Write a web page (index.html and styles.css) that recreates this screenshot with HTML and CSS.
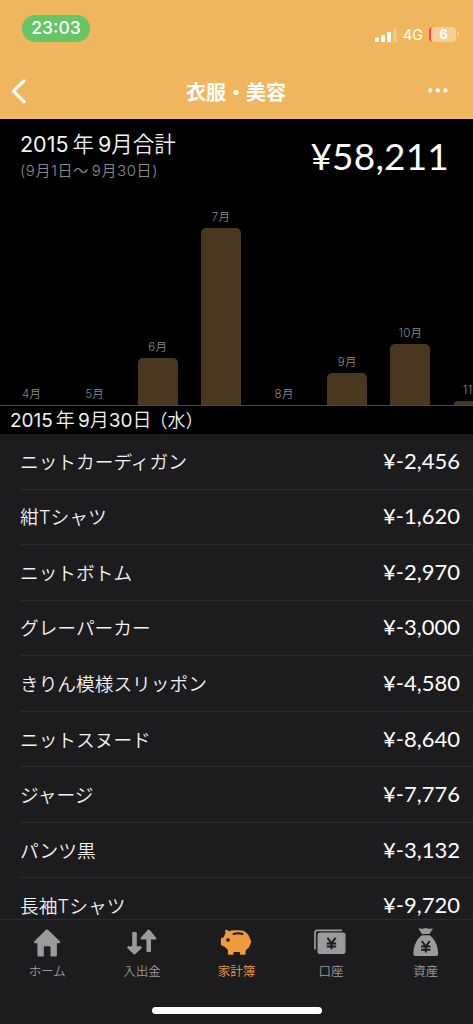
FILE: index.html
```
<!DOCTYPE html>
<html lang="ja">
<head>
    <meta charset="UTF-8">
    <meta name="viewport" content="width=device-width, initial-scale=1.0">
    <title>衣服・美容</title>
    <link rel="stylesheet" href="styles.css">
</head>
<body>
    <header class="header">
        <div class="status">
            <span class="clock">23:03</span>
            <div class="status-right">
                <svg class="signal" width="22" height="14" viewBox="0 0 22 14" fill="#fff">
                    <rect x="0" y="9.5" width="4" height="4.5" rx="1"/>
                    <rect x="6" y="7" width="4" height="7" rx="1"/>
                    <rect x="12" y="4" width="4" height="10" rx="1"/>
                    <rect x="18" y="0.5" width="4" height="13.5" rx="1" opacity=".25"/>
                </svg>
                <span class="network">4G</span>
                <span class="battery">6</span>
                <span class="battery-cap"></span>
            </div>
        </div>
        <nav class="nav">
            <svg width="16" height="26" viewBox="0 0 16 26" fill="none" stroke="#fff" stroke-width="3.1" stroke-linecap="round" stroke-linejoin="round">
                <path d="M14 2.800 3.400 13.200 14 23.700"/>
            </svg>
            <h1 class="title">衣服・美容</h1>
            <svg width="20" height="6" viewBox="0 0 20 6" fill="#fff">
                <circle cx="2.2" cy="2.4" r="2.1"/>
                <circle cx="9.8" cy="2.4" r="2.1"/>
                <circle cx="17.4" cy="2.4" r="2.1"/>
            </svg>
        </nav>
    </header>

    <section class="summary">
        <div>
            <p class="month"><span class="num">2015</span><span class="kanji">年</span><span class="num">9</span>月合計</p>
            <p class="period">(9月1日〜<span class="gap">9</span>月30日)</p>
        </div>
        <p class="total">¥58,211</p>
    </section>

    <!-- Monthly bars -->
    <section class="chart">
        <div class="col"><span>4月</span></div>
        <div class="col"><span>5月</span></div>
        <div class="col"><span>6月</span><div class="bar" style="height: 47px"></div></div>
        <div class="col"><span>7月</span><div class="bar" style="height: 177.5px"></div></div>
        <div class="col"><span>8月</span></div>
        <div class="col"><span>9月</span><div class="bar" style="height: 32px"></div></div>
        <div class="col"><span>10月</span><div class="bar" style="height: 61px"></div></div>
        <div class="col"><span>11月</span><div class="bar" style="height: 4px"></div></div>
    </section>

    <h2 class="date"><span class="num">2015</span><span class="kanji">年</span><span class="num">9</span>月<span class="num">30</span>日<span class="weekday">（水）</span></h2>

    <ul class="list">
        <li><span>ニットカーディガン</span><span class="amount">¥-2,456</span></li>
        <li><span>紺Tシャツ</span><span class="amount">¥-1,620</span></li>
        <li><span>ニットボトム</span><span class="amount">¥-2,970</span></li>
        <li><span>グレーパーカー</span><span class="amount">¥-3,000</span></li>
        <li><span>きりん模様スリッポン</span><span class="amount">¥-4,580</span></li>
        <li><span>ニットスヌード</span><span class="amount">¥-8,640</span></li>
        <li><span>ジャージ</span><span class="amount">¥-7,776</span></li>
        <li><span>パンツ黒</span><span class="amount">¥-3,132</span></li>
        <li><span>長袖Tシャツ</span><span class="amount">¥-9,720</span></li>
    </ul>

    <footer class="tabbar">
        <div class="tabs">
            <a class="tab">
                <svg width="34" height="30" viewBox="0 0 34 30" fill="currentColor">
                    <path d="M16 .8q1-.8 2 0L30 12.600q.8 1.400-.8 1.700h-2.300v12q0 1.200-1.200 1.200h-5.200v-9.300q0-1-1-1h-4.700q-1 0-1 1v9.300H8.600q-1.200 0-1.200-1.200v-12H5q-1.600-.3-.8-1.700z"/>
                </svg>
                <span>ホーム</span>
            </a>
            <a class="tab">
                <svg width="34" height="30" viewBox="0 0 34 30" fill="currentColor">
                    <path d="M7.200 4q0-1 1-1h2.600q1 0 1 1v13.300h4q1.800.4.7 2l-6 5.800q-1 .8-2 0l-6-5.800q-1.100-1.600.7-2h4z"/>
                    <path d="M21.400 22q0 1 1 1H25q1 0 1-1V10.500h4.500q1.400-.4.600-1.800L24.700.9q-1-.8-2 0l-7 7.800q-.8 1.400.8 1.800h4.900z"/>
                </svg>
                <span>入出金</span>
            </a>
            <a class="tab active">
                <svg width="34" height="30" viewBox="0 0 34 30">
                    <path fill="currentColor" d="M6.300 1.300q0-1.200 1.200-.6l2.800 1.500Q12.500 1.200 15 1.200h6q7 .4 9.600 7.400l1.500 3.600q.4.800-.2 1.500l-2 4.800-3.300 3v3.200q0 1-1 1h-3.800q-1 0-1-1v-1.800h-6.200v1.800q0 1-1 1H9.900q-1 0-1-1v-3.600L6 18.100l-3.100-1.600q-1-.5-1-1.500V10q0-1 1-1.200l1.700-.6 1.700-3.500z"/>
                    <circle cx="9" cy="11.100" r="1.800" fill="#1c1c1e"/>
                    <path d="M14.500 5q4.500-1.500 9 0" fill="none" stroke="#1c1c1e" stroke-width="1.900" stroke-linecap="round"/>
                </svg>
                <span>家計簿</span>
            </a>
            <a class="tab">
                <svg width="34" height="30" viewBox="0 0 34 30">
                    <path d="M1 20.500V3.800q0-2.500 2.500-2.500H28" fill="none" stroke="currentColor" stroke-width="1.700"/>
                    <rect x="3.500" y="3.500" width="28" height="21.500" rx="2.500" fill="currentColor"/>
                    <path d="m13.500 8.800 4 5.500 4-5.500M12.800 14.400h9.400M12.800 17.500h9.400M17.500 14.300v6" fill="none" stroke="#1c1c1e" stroke-width="2"/>
                </svg>
                <span>口座</span>
            </a>
            <a class="tab">
                <svg width="34" height="30" viewBox="0 0 34 30">
                    <path fill="currentColor" d="M10.500-.8q2.300.9 4 .2 2.200-.8 4.400 0 2 .7 4-.2 1.200-.2.700.9l-3.200 5h-7.400L9.800.1q-.5-1.100.7-.9zM13 6.200h7.600c4.500 3.300 8.200 9 8.600 18.600q0 2.200-2.200 2.200H6.500q-2.200 0-2.200-2.200C4.700 15.200 8.500 9.500 13 6.200z"/>
                    <path d="m12.800 12 4 5.500 4-5.500M12.100 17.600h9.400M12.100 20.700h9.400M16.800 17.500v6" fill="none" stroke="#1c1c1e" stroke-width="2"/>
                </svg>
                <span>資産</span>
            </a>
        </div>
        <div class="home-indicator"></div>
    </footer>
</body>
</html>
```

FILE: styles.css
```
* {
    box-sizing: border-box;
}
body {
    margin: 0;
    height: 1024px;
    display: flex;
    flex-direction: column;
    overflow: hidden;
    background-color: #000;
    color: #f2f2f2;
    font-family: Inter, "Noto Sans CJK JP", sans-serif;
    font-weight: 350;
}
p, h1, h2, ul {
    margin: 0;
    padding: 0;
}
svg {
    overflow: visible;
}
.header {
    flex: none;
    height: 118.500px;
    background-color: #f0b65e;
    color: #fff;
}
.status {
    height: 62px;
    padding: 15px 14px 0 22px;
    display: flex;
    justify-content: space-between;
    align-items: flex-start;
}
.clock {
    width: 68px;
    height: 27px;
    border-radius: 14px;
    background-color: #65c666;
    font-size: 17.500px;
    font-weight: 450;
    line-height: 26px;
    text-align: center;
}
.status-right {
    display: flex;
    align-items: center;
    margin-top: 12px;
}
.network {
    width: 22px;
    margin-left: 6px;
    font-size: 14.500px;
    font-weight: 400;
    line-height: 15px;
}
.battery {
    width: 27px;
    height: 15px;
    margin-left: 4px;
    border-radius: 4px;
    border-left: 2px solid #f4483e;
    background-color: #f5cf94;
    font-size: 13px;
    font-weight: 700;
    line-height: 15px;
    text-align: center;
}
.battery-cap {
    width: 2px;
    height: 5px;
    margin-left: 1px;
    border-radius: 0 2px 2px 0;
    background-color: #f5cf94;
}
.nav {
    height: 57px;
    padding: 1px 25px 0 10px;
    display: flex;
    justify-content: space-between;
    align-items: center;
}
.title {
    padding: 3px 0 0 18px;
    font-size: 20px;
    font-weight: 700;
    line-height: 30px;
}
.summary {
    flex: none;
    height: 85px;
    padding: 10px 24px 0 20px;
    display: flex;
    justify-content: space-between;
}
.month {
    font-size: 21.500px;
    line-height: 31px;
}
.num {
    font-weight: 400;
}
.kanji {
    margin: 0 4px;
}
.period {
    color: #8a8a8a;
    font-size: 15px;
    letter-spacing: 0.6px;
    line-height: 21px;
}
.gap {
    margin-left: 3px;
}
.total {
    color: #fff;
    font-family: Lato, sans-serif;
    font-size: 37px;
    font-weight: 400;
    letter-spacing: 0.2px;
    line-height: 53px;
}
.chart {
    flex: none;
    height: 202.500px;
    display: flex;
    align-items: flex-end;
    overflow: hidden;
    border-bottom: 1px solid #48484a;
}
.col {
    flex: none;
    width: 63.150px;
    display: flex;
    flex-direction: column;
    align-items: center;
    color: #8a8a8a;
    font-size: 11.500px;
    letter-spacing: 0.3px;
    line-height: 22px;
}
.bar {
    width: 40px;
    border-radius: 5px 5px 0 0;
    background-color: #49371f;
}
.date {
    flex: none;
    height: 28px;
    padding-left: 10px;
    font-size: 19px;
    font-weight: 350;
    line-height: 29px;
}
.date .kanji {
    margin: 0 3px;
}
.weekday {
    font-size: 18px;
    margin-left: -2px;
}
.list {
    flex: 1;
    min-height: 0;
    overflow: hidden;
    padding-left: 20px;
    background-color: #1c1c1e;
    list-style: none;
}
.list li {
    height: 55.550px;
    padding: 0 13px 2px 0;
    display: flex;
    justify-content: space-between;
    align-items: center;
    border-bottom: 1px solid #2b2b2d;
    font-size: 18.700px;
}
.amount {
    color: #fff;
    font-family: Lato, sans-serif;
    font-size: 22px;
    font-weight: 400;
}
.tabbar {
    flex: none;
    height: 105px;
    border-top: 1px solid #2b2b2d;
    background-color: #1c1c1e;
}
.tabs {
    height: 87px;
    padding-top: 9px;
    display: flex;
}
.tab {
    flex: 1;
    display: flex;
    flex-direction: column;
    align-items: center;
    color: #9b9b9b;
    font-size: 12.500px;
    font-weight: 350;
    line-height: 26px;
}
.tab.active {
    color: #f09a3e;
}
.home-indicator {
    width: 170px;
    height: 7px;
    margin: 0 auto;
    border-radius: 4px;
    background-color: #fff;
}
```
